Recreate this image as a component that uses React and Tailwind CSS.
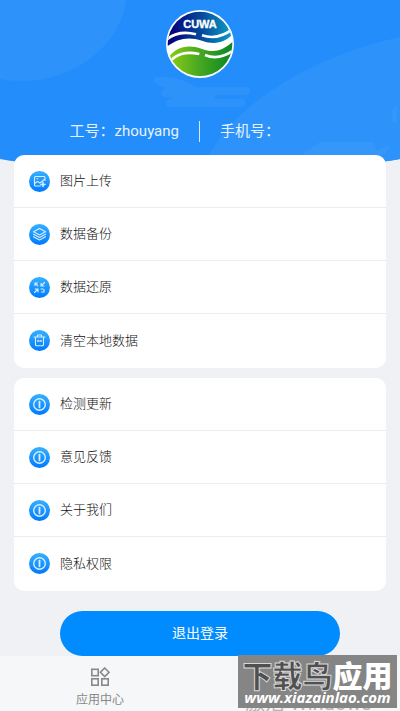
const dataItems = [
  { label: '图片上传', icon: 'image' },
  { label: '数据备份', icon: 'layers' },
  { label: '数据还原', icon: 'shrink' },
  { label: '清空本地数据', icon: 'trash' },
]

const aboutItems = [
  { label: '检测更新', icon: 'info' },
  { label: '意见反馈', icon: 'info' },
  { label: '关于我们', icon: 'info' },
  { label: '隐私权限', icon: 'info' },
]

const glyphs = {
  image: (
    <>
      <path d="M16 9.5V6.5Q16 5.5 15 5.5H6.5Q5.5 5.5 5.5 6.5V14Q5.5 15 6.5 15H11.5" />
      <path d="M5.5 12.5L8.5 10.5L11 12L15.5 8.5" />
      <path d="M8 7.8H8.8" />
      <path d="M14 11.5V15.5M12 13.5H16" strokeWidth="1.6" />
    </>
  ),
  layers: (
    <>
      <path d="M10.5 4.5L16.5 7.8L10.5 11L4.5 7.8Z" />
      <path d="M4.5 10.2L10.5 13.5L16.5 10.2" />
      <path d="M4.5 12.7L10.5 16L16.5 12.7" />
    </>
  ),
  shrink: (
    <>
      <path d="M15.5 5.5L12 9M12 6.2V9H15" />
      <path d="M5.5 15.5L9 12M6.2 12H9V15" />
      <path d="M6 8.5V6H8.5M6 6L8.8 8.8" />
      <path d="M15 12.5V15H12.5M12 12H14" />
    </>
  ),
  trash: (
    <>
      <path d="M5 7H16M8.5 6.8V5H12.5V6.8" />
      <path d="M6.5 7.5V14.5Q6.5 15.8 7.8 15.8H13.2Q14.5 15.8 14.5 14.5V7.5" />
      <path d="M8.7 11H9.7M11.3 11H12.3" strokeWidth="1.6" />
    </>
  ),
  info: (
    <>
      <circle cx="10.5" cy="10.5" r="5.8" strokeWidth="1.4" />
      <path d="M10.5 7.6V13.4" strokeWidth="1.8" />
    </>
  ),
}

function RowIcon({ name }) {
  return (
    <span className="flex size-[21px] shrink-0 rounded-full bg-linear-to-b from-[#35b0fe] to-[#007afd]">
      <svg
        viewBox="0 0 21 21"
        className="size-full"
        fill="none"
        stroke="#d9edff"
        strokeWidth="1.1"
        strokeLinecap="round"
        strokeLinejoin="round"
        aria-hidden="true"
      >
        {glyphs[name]}
      </svg>
    </span>
  )
}

function MenuCard({ items }) {
  return (
    <ul className="divide-y divide-[#ebecef] rounded-[10px] bg-white pb-px">
      {items.map((item) => (
        <li key={item.label} className="h-[53px]">
          <button type="button" className="flex size-full items-center gap-[10px] px-[15px] text-left">
            <RowIcon name={item.icon} />
            <span className="text-[13px] leading-5 font-light text-[#111111]">{item.label}</span>
          </button>
        </li>
      ))}
    </ul>
  )
}

function Logo() {
  return (
    <svg viewBox="0 0 204 204" className="size-[68px]" role="img" aria-label="CUWA">
      <defs>
        <linearGradient id="sky" x1="0" x2="1" y1="0" y2="0">
          <stop offset="0.1" stopColor="#04067e" />
          <stop offset="0.5" stopColor="#06459b" />
          <stop offset="0.95" stopColor="#0a9bc4" />
        </linearGradient>
        <linearGradient id="land" x1="0" x2="1" y1="0" y2="0">
          <stop offset="0.05" stopColor="#8ccb16" />
          <stop offset="0.5" stopColor="#45a821" />
          <stop offset="1" stopColor="#068424" />
        </linearGradient>
        <clipPath id="disc">
          <circle cx="102" cy="102" r="97" />
        </clipPath>
      </defs>
      <circle cx="102" cy="102" r="102" fill="#fff" />
      <g clipPath="url(#disc)">
        <path d="M0 0H204V68C176 102 142 104 108 92C66 78 32 86 0 112Z" fill="url(#sky)" />
        <path d="M0 152C30 106 68 104 106 116C142 130 170 124 204 92V204H0Z" fill="url(#land)" />
        <g fill="none" stroke="#fff" strokeWidth="8">
          <path d="M0 90C26 68 56 64 90 73" />
          <path d="M108 76C140 87 170 82 204 54" />
          <path d="M4 162C32 128 62 124 100 132" />
          <path d="M117 135C148 148 174 142 204 120" />
        </g>
      </g>
      <text
        x="102"
        y="54"
        textAnchor="middle"
        fill="#fff"
        stroke="#fff"
        strokeWidth="1"
        className="font-['Liberation_Sans',sans-serif] text-[33px] font-bold"
      >
        CUWA
      </text>
    </svg>
  )
}

function HeaderBackdrop() {
  return (
    <svg
      viewBox="0 0 400 163"
      preserveAspectRatio="none"
      className="absolute inset-0 size-full"
      aria-hidden="true"
    >
      <path d="M0 0H400V159Q380 163 360 163H40Q20 163 0 159Z" fill="#228dfb" />
      <path d="M0 0H126C120 46 74 81 22 81Q10 81 0 79Z" fill="#2d93fb" />
      <path d="M400 37C320 54 228 104 206 163H360Q380 163 400 159Z" fill="#2d93fb" />
      <path d="M302 155L320 142H374L376 150L390 146L384 155Z" fill="#3597fa" />
      <path d="M391 110L397 106V122H393Z" fill="#3597fa" />
      <path
        d="M157 77Q154 77 154 81Q156 85 166 88Q161 90 161 94Q162 97 172 98Q166 100 166 103Q166 107 170 107H242Q245 107 245 103Q245 99 242 99H215V95H247Q250 94 250 91Q250 87 247 87H196L182 80Q170 76 157 77Z"
        fill="#2d93fb"
      />
    </svg>
  )
}

function Watermark() {
  return (
    <div className="absolute right-[3px] bottom-[3px] z-10 flex h-[53px] w-[159px] flex-col items-center bg-[#858585] text-white">
      <p className="mt-[10px] text-[30px] leading-6 font-black whitespace-nowrap">
        <span className="text-[#505050] [-webkit-text-stroke:1px_#d8d8d8]">下载鸟</span>
        <span>应用</span>
      </p>
      <p className="font-['Open_Sans',sans-serif] text-[15px] leading-4 font-bold whitespace-nowrap italic">
        www.xiazainlao.com
      </p>
    </div>
  )
}

function TabBar() {
  return (
    <nav className="relative grid h-[55px] shrink-0 grid-cols-2 overflow-hidden bg-[#f6f7f9]">
      <a href="#apps" className="flex flex-col items-center gap-1 pt-[11px] text-[#888888]">
        <svg
          viewBox="0 0 20 20"
          className="size-5"
          fill="none"
          stroke="currentColor"
          strokeWidth="1.6"
          aria-hidden="true"
        >
          <rect x="1.8" y="2.3" width="6.4" height="6.4" />
          <path d="M14.7 1L19 5.3L14.7 9.6L10.4 5.3Z" />
          <rect x="1.8" y="11.8" width="6.4" height="6.4" />
          <rect x="11.8" y="11.8" width="6.4" height="6.4" />
        </svg>
        <span className="text-[12px] leading-[18px]">应用中心</span>
      </a>
      <p className="self-end pl-[45px] text-[20px] leading-4 whitespace-nowrap text-[#b4b5b7]">激活 Windows</p>
    </nav>
  )
}

export default function App() {
  return (
    <div className="relative flex min-h-screen flex-col bg-[#eff1f4] font-['Roboto','Noto_Sans_CJK_SC',sans-serif]">
      <header className="relative h-[163px] shrink-0">
        <HeaderBackdrop />
        <div className="relative flex flex-col items-center pt-[10px]">
          <Logo />
          <div className="mt-[43px] grid w-full grid-cols-2 text-[15px] leading-[21px] text-[#e6f2ff]">
            <p className="border-r border-[#d6e9ff] pr-5 text-right">工号：zhouyang</p>
            <p className="pl-5">手机号：</p>
          </div>
        </div>
      </header>

      <main className="relative -mt-2 flex flex-1 flex-col gap-[10px] px-[14px]">
        <MenuCard items={dataItems} />
        <MenuCard items={aboutItems} />
        <button
          type="button"
          className="mx-[46px] mt-[10px] h-[45px] rounded-full bg-[#008cff] text-[14px] text-white"
        >
          退出登录
        </button>
      </main>

      <TabBar />
      <Watermark />
    </div>
  )
}
